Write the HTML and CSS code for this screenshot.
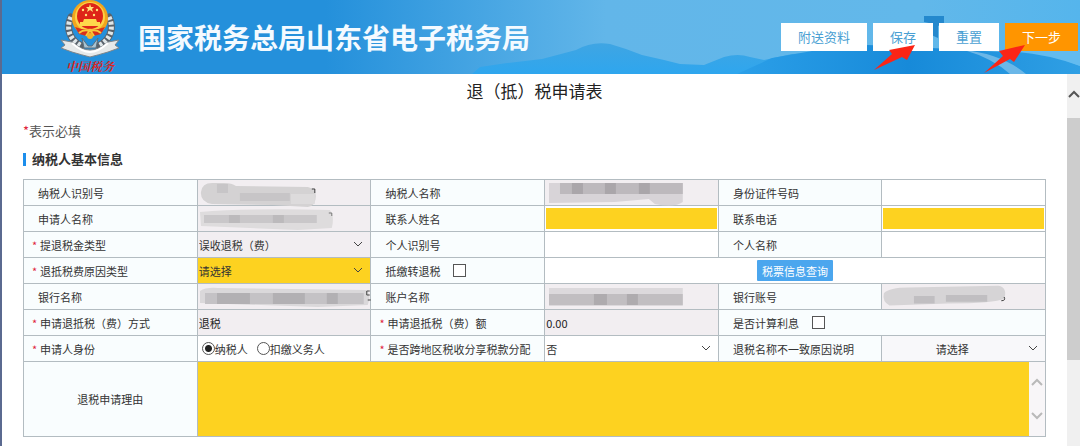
FILE: index.html
```html
<!DOCTYPE html>
<html lang="zh-CN">
<head>
    <meta charset="UTF-8">
    <meta name="viewport" content="width=device-width, initial-scale=1.0">
    <title>退（抵）税申请表</title>
    <link rel="stylesheet" href="styles.css">
</head>
<body>
    <header class="header">
        <!-- 山峦背景 -->
        <svg class="header-bg" viewBox="0 0 1078 74" preserveAspectRatio="xMaxYMax slice" aria-hidden="true">
            <defs>
                <linearGradient id="hill" x1="0" y1="0" x2="0" y2="1">
                    <stop offset="0" stop-color="#3fa5e3"/>
                    <stop offset="1" stop-color="#2ea6ee"/>
                </linearGradient>
                <linearGradient id="sea" x1="0" y1="0" x2="1" y2="0">
                    <stop offset="0" stop-color="#2b9fe8"/>
                    <stop offset="0.5" stop-color="#178ad9"/>
                    <stop offset="1" stop-color="#2f9fe4"/>
                </linearGradient>
            </defs>
            <path d="M470 74L478 67L505 63L540 59L574 50Q590 41 608 44L624 49L640 55L662 60L678 64L702 65L722 57Q736 53 748 57L762 60L790 54L840 52L880 74Z" fill="url(#hill)"/>
            <path d="M735 74L770 58L810 51L866 45L930 48L1000 52L1040 51L1078 66V74Z" fill="url(#sea)"/>
            <path d="M922 16H942V23L936 26V38L927 34V23L922 22Z" fill="#2488cd"/>
            <path d="M962 50Q1000 54 1024 74H1008Q990 58 962 50Z" fill="#7dbfea" opacity=".8"/>
            <path d="M1000 51Q1040 52 1078 66V50H1000Z" fill="#63bbef"/>
        </svg>
        <div class="logo">
            <svg class="emblem" viewBox="0 0 60 58" aria-hidden="true">
                <g fill="none" stroke="#59626b" stroke-width="7" stroke-linecap="round">
                    <path d="M11 17C5 30 11 41 22 46"/>
                    <path d="M49 17C55 30 49 41 38 46"/>
                </g>
                <g fill="none" stroke="#dfe6e8" stroke-width="5" stroke-dasharray="3 2">
                    <path d="M11 17C5 30 11 41 22 46"/>
                    <path d="M49 17C55 30 49 41 38 46"/>
                </g>
                <path d="M22 38L28 46H32L38 38L36 48H24Z" fill="#a9c4d3" stroke="#5c6f7c"/>
                <path d="M1 40L12 42Q21 50 30 50Q39 50 48 42L59 40L55 45L59 48L48 52Q38 55 30 57Q22 55 12 52L1 48L5 45Z" fill="#e6e9e9" stroke="#7d858a"/>
                <path d="M12 43Q22 52 30 52Q38 52 48 43" fill="none" stroke="#fff" stroke-width="2"/>
                <circle cx="30" cy="18" r="18" fill="#f2a51d"/>
                <circle cx="30" cy="17" r="15" fill="#fbd246"/>
                <circle cx="30" cy="16" r="13" fill="#de2518"/>
                <path d="M30 4L31 7H34L32 9L33 12L30 10L27 12L28 9L26 7H29Z" fill="#ffe37a"/>
                <g fill="#ffe37a">
                    <circle cx="23" cy="10" r="1.2"/><circle cx="37" cy="10" r="1.2"/>
                    <circle cx="26" cy="15" r="1.2"/><circle cx="34" cy="15" r="1.2"/>
                </g>
                <path d="M24 19H36L37 22H40V26H20V22H23Z" fill="#ffd84b"/>
                <path d="M15 27Q30 33 45 27L41 34Q30 38 19 34Z" fill="#d8301c"/>
                <path d="M19 33Q24 29 30 31Q36 29 41 33M26 36L30 30L34 36" fill="none" stroke="#f9c93b" stroke-width="2"/>
                <circle cx="30" cy="36" r="3" fill="#f6b32b"/>
            </svg>
            <span class="logo-text">中国税务</span>
        </div>
        <h1 class="site-name">国家税务总局山东省电子税务局</h1>
        <div class="actions">
            <button type="button" class="btn">附送资料</button>
            <button type="button" class="btn">保存
                <svg class="arrow arrow-save" viewBox="0 0 41 28" aria-hidden="true"><path d="M0 25L18 9L15 5L41 0L33 15L28 12Z" fill="#fb2516"/></svg>
            </button>
            <button type="button" class="btn">重置</button>
            <button type="button" class="btn btn-next">下一步
                <svg class="arrow arrow-next" viewBox="0 0 41 28" aria-hidden="true"><path d="M0 28L19 11L15 6L41 0L30 17L26 14Z" fill="#fb2516"/></svg>
            </button>
        </div>
    </header>
    <div class="page">
        <main class="content">
            <h2 class="form-title">退（抵）税申请表</h2>
            <p class="tip"><span class="star">*</span>表示必填</p>
            <h3 class="section-title">纳税人基本信息</h3>
            <form>
                <table class="info">
                    <colgroup>
                        <col class="col-wide"><col class="col-wide"><col class="col-wide"><col class="col-wide"><col><col>
                    </colgroup>
                    <tr>
                        <th>纳税人识别号</th>
                        <td class="readonly">
                            <svg class="mask" viewBox="0 0 173 25" aria-hidden="true">
                                <path d="M3 12Q4 3 14 3H26Q34 3 38 6L110 7Q118 9 118 16Q118 26 110 27L75 25L14 24Q2 22 3 12Z" fill="#d4d2d3"/>
                                <path d="M19 4H30V13H19ZM42 13H92V21H42Z" fill="#c7c5c7"/>
                                <path d="M93 14H117V24H93Z" fill="#dddbdc"/>
                                <path d="M114 9H117V13" fill="none" stroke="#333"/>
                            </svg>
                        </td>
                        <th>纳税人名称</th>
                        <td class="readonly">
                            <svg class="mask" viewBox="0 0 173 25" aria-hidden="true">
                                <path d="M4 3H138V22Q130 28 110 24L104 19L70 22L4 23Z" fill="#d8d4d8"/>
                                <path d="M15 3H138V14H15Z" fill="#bdb9bd"/>
                                <path d="M60 3H71V14H60ZM27 3H38V14H27ZM94 3H105V14H94Z" fill="#aaa6aa"/>
                            </svg>
                        </td>
                        <th><label for="idNo">身份证件号码</label></th>
                        <td><input type="text" id="idNo"></td>
                    </tr>
                    <tr>
                        <th>申请人名称</th>
                        <td class="readonly">
                            <svg class="mask" viewBox="0 0 173 25" aria-hidden="true">
                                <path d="M2 6Q50 2 132 4Q137 10 134 22L100 24L3 20Z" fill="#dedcdd"/>
                                <path d="M6 9H119V17H6Z" fill="#c9c7c9"/>
                                <path d="M31 9H42V17H31ZM75 9H86V17H75Z" fill="#bcbabc"/>
                                <path d="M131 7H134V10" fill="none" stroke="#777"/>
                            </svg>
                        </td>
                        <th><label for="contact">联系人姓名</label></th>
                        <td class="boxed"><input type="text" id="contact" class="must"></td>
                        <th><label for="phone">联系电话</label></th>
                        <td class="boxed"><input type="text" id="phone" class="must"></td>
                    </tr>
                    <tr>
                        <th class="required"><span class="star">*</span><label for="refundType">提退税金类型</label></th>
                        <td>
                            <div class="select readonly">
                                <select id="refundType"><option>误收退税（费）</option></select>
                                <svg viewBox="0 0 10 6" aria-hidden="true"><path d="M1 1L5 5L9 1"/></svg>
                            </div>
                        </td>
                        <th><label for="personNo">个人识别号</label></th>
                        <td><input type="text" id="personNo"></td>
                        <th><label for="personName">个人名称</label></th>
                        <td><input type="text" id="personName"></td>
                    </tr>
                    <tr>
                        <th class="required"><span class="star">*</span><label for="reasonType">退抵税费原因类型</label></th>
                        <td>
                            <div class="select must">
                                <select id="reasonType"><option>请选择</option></select>
                                <svg viewBox="0 0 10 6" aria-hidden="true"><path d="M1 1L5 5L9 1"/></svg>
                            </div>
                        </td>
                        <th><label class="check">抵缴转退税<input type="checkbox"></label></th>
                        <td colspan="3" class="center"><button type="button" class="btn-query">税票信息查询</button></td>
                    </tr>
                    <tr>
                        <th>银行名称</th>
                        <td class="readonly">
                            <svg class="mask" viewBox="0 0 173 25" aria-hidden="true">
                                <path d="M2 7Q8 3 20 4L168 6Q174 10 170 21L120 23L2 19Z" fill="#dad8da"/>
                                <path d="M7 9H166V20H7Z" fill="#c4c2c5"/>
                                <path d="M19 9H30V20H19ZM30 9H52V20H30ZM75 9H107V20H75ZM129 9H140V20H129Z" fill="#b2b0b3"/>
                                <path d="M172 7H169V11H172M170 16H173" fill="none" stroke="#444"/>
                            </svg>
                        </td>
                        <th>账户名称</th>
                        <td class="readonly">
                            <svg class="mask" viewBox="0 0 173 25" aria-hidden="true">
                                <path d="M4 4H138V22H4Z" fill="#dcd9dc"/>
                                <path d="M4 10H138V21H4Z" fill="#c1bec1"/>
                                <path d="M49 10H62V21H49ZM82 10H93V21H82Z" fill="#aeabae"/>
                            </svg>
                        </td>
                        <th>银行账号</th>
                        <td class="readonly">
                            <svg class="mask" viewBox="0 0 173 25" aria-hidden="true">
                                <path d="M2 9Q8 3 28 3L124 1Q134 3 130 15Q120 20 70 20L8 22Q0 18 2 9Z" fill="#d6d4d6"/>
                                <path d="M34 12H56V20H34ZM68 11H112V18H68Z" fill="#c0bec1"/>
                                <path d="M130 13Q132 17 127 17" fill="none" stroke="#333"/>
                            </svg>
                        </td>
                    </tr>
                    <tr>
                        <th class="required"><span class="star">*</span><label for="way">申请退抵税（费）方式</label></th>
                        <td class="readonly"><input type="text" id="way" value="退税" readonly></td>
                        <th class="required"><span class="star">*</span><label for="amount">申请退抵税（费）额</label></th>
                        <td class="readonly"><input type="text" id="amount" value="0.00" readonly></td>
                        <th colspan="2"><label class="check">是否计算利息<input type="checkbox"></label></th>
                    </tr>
                    <tr>
                        <th class="required"><span class="star">*</span>申请人身份</th>
                        <td>
                            <div class="radios">
                                <label><input type="radio" name="identity" checked>纳税人</label>
                                <label><input type="radio" name="identity">扣缴义务人</label>
                            </div>
                        </td>
                        <th class="required"><span class="star">*</span><label for="crossArea">是否跨地区税收分享税款分配</label></th>
                        <td>
                            <div class="select">
                                <select id="crossArea"><option>否</option></select>
                                <svg viewBox="0 0 10 6" aria-hidden="true"><path d="M1 1L5 5L9 1"/></svg>
                            </div>
                        </td>
                        <th><label for="nameDiff">退税名称不一致原因说明</label></th>
                        <td>
                            <div class="select select-center">
                                <select id="nameDiff"><option>请选择</option></select>
                                <svg viewBox="0 0 10 6" aria-hidden="true"><path d="M1 1L5 5L9 1"/></svg>
                            </div>
                        </td>
                    </tr>
                    <tr>
                        <th class="center"><label for="reason">退税申请理由</label></th>
                        <td colspan="5">
                            <div class="reason">
                                <textarea id="reason" class="must"></textarea>
                                <div class="reason-scroll" aria-hidden="true">
                                    <svg viewBox="0 0 12 8"><path d="M1 7L6 2L11 7"/></svg>
                                    <svg viewBox="0 0 12 8"><path d="M1 1L6 6L11 1"/></svg>
                                </div>
                            </div>
                        </td>
                    </tr>
                </table>
            </form>
        </main>
        <div class="scrollbar" aria-hidden="true">
            <svg viewBox="0 0 12 8"><path d="M1 7L6 2L11 7"/></svg>
            <div class="thumb"></div>
        </div>
    </div>
</body>
</html>
```
FILE: styles.css
```css
* {
    box-sizing: border-box;
}

body {
    display: flex;
    flex-direction: column;
    min-height: 100vh;
    margin: 0;
    border-left: 2px solid #5b6a90;
    background-color: #fff;
    color: #333;
    font-family: "Noto Sans CJK SC", sans-serif;
    font-size: 11px;
}

button, input, select, textarea {
    font: inherit;
    color: inherit;
}

.header {
    position: relative;
    display: flex;
    align-items: center;
    height: 74px;
    padding: 0 2px 0 58px;
    background: linear-gradient(90deg, #2490db 0%, #2490db 30%, #62b6e9 56%, #62b8ea 85%, #55b5ec 100%);
}

.header-bg {
    position: absolute;
    top: 0;
    left: 0;
    width: 100%;
    height: 100%;
}

.logo {
    position: relative;
    display: flex;
    flex-direction: column;
    align-items: center;
    width: 60px;
}

.emblem {
    width: 60px;
    height: 58px;
}

.logo-text {
    color: #d8261f;
    font-family: "Noto Serif CJK SC", "Noto Sans CJK SC", serif;
    font-size: 12px;
    font-style: italic;
    font-weight: bold;
    line-height: 16px;
    white-space: nowrap;
}

.site-name {
    position: relative;
    margin: 0 auto 0 18px;
    color: #f4faff;
    font-size: 28px;
    font-weight: bold;
    line-height: 40px;
    white-space: nowrap;
}

.actions {
    position: relative;
    display: flex;
    gap: 6px;
}

.btn {
    position: relative;
    height: 28px;
    padding: 0 17px;
    border: none;
    background-color: #fff;
    color: #4a9fd3;
    font-size: 13px;
    line-height: 28px;
    white-space: nowrap;
    cursor: pointer;
}

.btn-next {
    background-color: #ff9500;
    color: #fff;
}

.arrow {
    position: absolute;
    top: 22px;
    width: 41px;
    height: 28px;
}

.arrow-save {
    left: 1px;
}

.arrow-next {
    left: -21px;
}

.page {
    display: flex;
    flex: 1;
}

.content {
    flex: 1;
    padding: 5px 21px 10px;
}

.form-title {
    margin: 0;
    color: #222;
    font-size: 17px;
    font-weight: normal;
    line-height: 24px;
    text-align: center;
}

.tip {
    margin: 18px 0 8px;
    color: #555;
    font-size: 13px;
    line-height: 20px;
}

.star {
    color: #e0243c;
}

.section-title {
    display: flex;
    align-items: center;
    gap: 6px;
    margin: 0 0 10px;
    font-size: 13px;
    font-weight: bold;
    line-height: 20px;
}

.section-title::before {
    content: "";
    width: 3px;
    height: 13px;
    background-color: #1c8eec;
}

.info {
    width: 100%;
    border-collapse: collapse;
    table-layout: fixed;
}

.col-wide {
    width: 17%;
}

.info th,
.info td {
    height: 26px;
    padding: 0;
    border: 1px solid #b3bcc1;
    line-height: 16px;
}

.info th {
    padding-left: 14px;
    background-color: #f9fdfe;
    font-weight: normal;
    text-align: left;
    white-space: nowrap;
}

.info .required {
    padding-left: 8px;
}

.required .star {
    display: inline-block;
    width: 8px;
}

.info .center {
    padding: 0;
    text-align: center;
}

.readonly {
    background-color: #f2eef1;
}

.must {
    background-color: #fdd220;
}

.info input[type="text"] {
    display: block;
    width: 100%;
    height: 25px;
    padding: 0 1px;
    border: none;
    color: #222;
}

.info input[type="text"]:not(.must) {
    background-color: transparent;
}

.info .boxed {
    padding: 2px 1px;
}

.boxed input[type="text"] {
    height: 21px;
}

.mask {
    display: block;
    width: 173px;
    max-width: 100%;
    height: 25px;
    overflow: visible;
}

.select {
    position: relative;
}

.select select {
    display: block;
    width: 100%;
    height: 25px;
    padding: 0 24px 0 1px;
    border: none;
    background: none;
    appearance: none;
}

.select svg {
    position: absolute;
    top: 9px;
    right: 7px;
    width: 10px;
    height: 6px;
    pointer-events: none;
}

.select path,
.reason-scroll path,
.scrollbar path {
    fill: none;
    stroke: #444;
}

.select-center {
    background-color: #f8f8fa;
}

.select-center select {
    text-align: center;
    text-align-last: center;
}

.check {
    display: flex;
    align-items: center;
    gap: 13px;
}

.check input,
.radios input {
    width: 13px;
    height: 13px;
    margin: 0;
    border: 1px solid #555;
    background-color: #fff;
    appearance: none;
}

.check input:checked {
    background-color: #555;
}

.radios {
    display: flex;
    gap: 9px;
    padding-left: 4px;
}

.radios label {
    display: flex;
    align-items: center;
}

.radios input {
    border-radius: 50%;
}

.radios input:checked {
    background: radial-gradient(circle, #222 3px, #fff 4px);
}

.btn-query {
    height: 21px;
    padding: 0 5px;
    border: none;
    border-radius: 1px;
    background-color: #4ba6ee;
    color: #fff;
    line-height: 20px;
    vertical-align: middle;
    cursor: pointer;
}

.reason {
    display: flex;
}

.reason textarea {
    display: block;
    flex: 1;
    height: 74px;
    padding: 2px;
    border: none;
    resize: none;
}

.reason-scroll {
    display: flex;
    flex-direction: column;
    align-items: center;
    justify-content: space-between;
    width: 16px;
    padding: 16px 0;
    background-color: #f8f6f8;
}

.reason-scroll svg {
    width: 12px;
    height: 8px;
}

.reason-scroll path {
    stroke: #b9b9b9;
    stroke-width: 2;
}

.scrollbar {
    display: flex;
    flex-direction: column;
    align-items: center;
    width: 13px;
    background-color: #f0f0f0;
}

.scrollbar svg {
    width: 12px;
    height: 8px;
    margin: 16px 0 20px;
}

.scrollbar path {
    stroke: #555;
    stroke-width: 2;
}

.thumb {
    width: 100%;
    height: 65%;
    background-color: #cdcdcd;
}
```
